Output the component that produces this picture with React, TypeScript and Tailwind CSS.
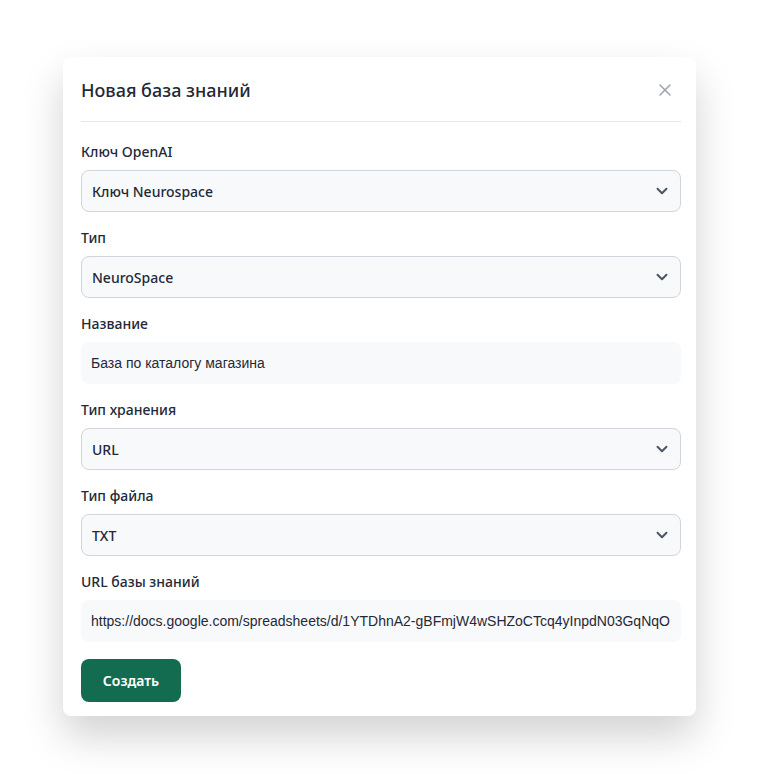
import { ChevronDown, X } from "lucide-react";

const sans = { fontFamily: '"Noto Sans", "Open Sans", sans-serif' };
const arial = { fontFamily: '"Liberation Sans", Arial, sans-serif' };

function Label({ children }: { children: React.ReactNode }) {
  return (
    <div className="h-5 mb-2 text-[14px] leading-5 font-medium text-[#1f2937]">
      {children}
    </div>
  );
}

function SelectField({ label, value }: { label: string; value: string }) {
  return (
    <div>
      <Label>{label}</Label>
      <div className="h-[42px] flex items-center justify-between pl-[10px] pr-[9px] rounded-lg border border-[#d1d5db] bg-[#f8f9fb]">
        <span className="text-[14px] font-medium text-[#1f2937]">{value}</span>
        <ChevronDown size={18} strokeWidth={2.6} className="text-[#4b5563]" />
      </div>
    </div>
  );
}

function TextField({ label, value }: { label: string; value: string }) {
  return (
    <div>
      <Label>{label}</Label>
      <div className="h-[42px] flex items-center px-[10px] rounded-lg bg-[#f8f9fb] overflow-hidden">
        <span style={arial} className="text-[14px] text-[#1f2937] whitespace-nowrap">
          {value}
        </span>
      </div>
    </div>
  );
}

export default function App() {
  return (
    <div style={sans} className="w-[759px] h-[774px] bg-white pt-[57px] pl-[63px]">
      <div className="w-[633px] h-[659px] bg-white rounded-lg shadow-[0_20px_40px_rgba(0,0,0,0.18)] pl-[18px] pr-[15px] pt-[14px]">
        <div className="flex items-center justify-between h-[38px] border-b border-[#e5e7eb] box-content pb-[12px]">
          <h2 className="text-[18px] font-medium text-[#1f2937]">Новая база знаний</h2>
          <X size={20} strokeWidth={1.8} className="text-[#9ca3af] mr-[6px]" />
        </div>
        <div className="flex flex-col gap-4 mt-[20px]">
          <SelectField label="Ключ OpenAI" value="Ключ Neurospace" />
          <SelectField label="Тип" value="NeuroSpace" />
          <TextField label="Название" value="База по каталогу магазина" />
          <SelectField label="Тип хранения" value="URL" />
          <SelectField label="Тип файла" value="TXT" />
          <TextField
            label="URL базы знаний"
            value="https://docs.google.com/spreadsheets/d/1YTDhnA2-gBFmjW4wSHZoCTcq4yInpdN03GqNqO"
          />
        </div>
        <button className="mt-[17px] w-[100px] h-[43px] rounded-lg bg-[#136c4f] text-white text-[14px] font-semibold">
          Создать
        </button>
      </div>
    </div>
  );
}
